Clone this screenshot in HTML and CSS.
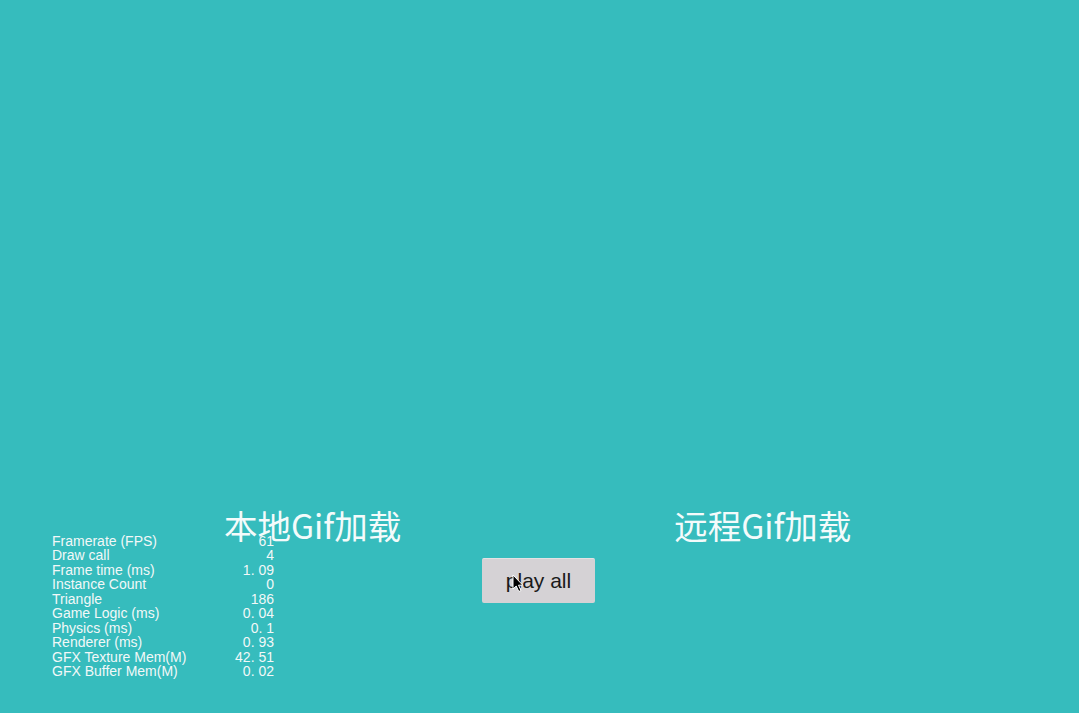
FILE: index.html
```html
<!DOCTYPE html>
<html lang="zh">
<head>
    <meta charset="UTF-8">
    <meta name="viewport" content="width=device-width, initial-scale=1.0">
    <title>Gif加载</title>
    <link rel="stylesheet" href="styles.css">
</head>
<body>
    <div class="scene">
        <div class="titles">
            <div class="title">本地Gif加载</div>
            <div class="title">远程Gif加载</div>
        </div>
        <div class="actions">
            <button class="play-btn">play all</button>
        </div>

        <div class="stats">
            <span>Framerate (FPS)</span><span class="val">61</span>
            <span>Draw call</span><span class="val">4</span>
            <span>Frame time (ms)</span><span class="val">1. 09</span>
            <span>Instance Count</span><span class="val">0</span>
            <span>Triangle</span><span class="val">186</span>
            <span>Game Logic (ms)</span><span class="val">0. 04</span>
            <span>Physics (ms)</span><span class="val">0. 1</span>
            <span>Renderer (ms)</span><span class="val">0. 93</span>
            <span>GFX Texture Mem(M)</span><span class="val">42. 51</span>
            <span>GFX Buffer Mem(M)</span><span class="val">0. 02</span>
        </div>

        <svg class="cursor" width="12" height="19" viewBox="0 0 12 19">
            <path d="M1 1 L1 15 L4.2 12 L6.8 17.5 L9 16.5 L6.5 11.2 L10.8 11.2 Z" fill="#000" stroke="#fff" stroke-width="1"/>
        </svg>
    </div>
</body>
</html>
```

FILE: styles.css
```css
/* scene */
body {
    margin: 0;
    padding: 0;
    font-family: "Liberation Sans", "Noto Sans CJK SC", sans-serif;
    background-color: #36bcbd;
    overflow: hidden;
}
.scene {
    position: relative;
    height: 713px;
}
.titles {
    display: flex;
    gap: 273px;
    padding: 504px 0 0 224px;
}
.title {
    font-family: "Noto Sans CJK SC", sans-serif;
    font-size: 33.5px;
    font-weight: 400;
    line-height: 42px;
    color: #f4fbfb;
    white-space: nowrap;
}
.actions {
    display: flex;
    justify-content: center;
    padding-right: 2px;
    margin-top: 12px;
}
.play-btn {
    width: 113px;
    height: 45px;
    background-color: #d5d2d5;
    border: none;
    border-top: 1px solid #e4e2e4;
    border-radius: 2px;
    font-family: "Liberation Sans", sans-serif;
    font-size: 21px;
    color: #1a1a1a;
    padding: 0;
}

/* stats overlay */
.stats {
    position: absolute;
    left: 52px;
    top: 534px;
    width: 222px;
    display: grid;
    grid-template-columns: 1fr auto;
    font-size: 14px;
    line-height: 14.45px;
    color: #f2f8f8;
}
.stats .val {
    text-align: right;
}
.cursor {
    position: absolute;
    left: 512px;
    top: 574px;
}
```
